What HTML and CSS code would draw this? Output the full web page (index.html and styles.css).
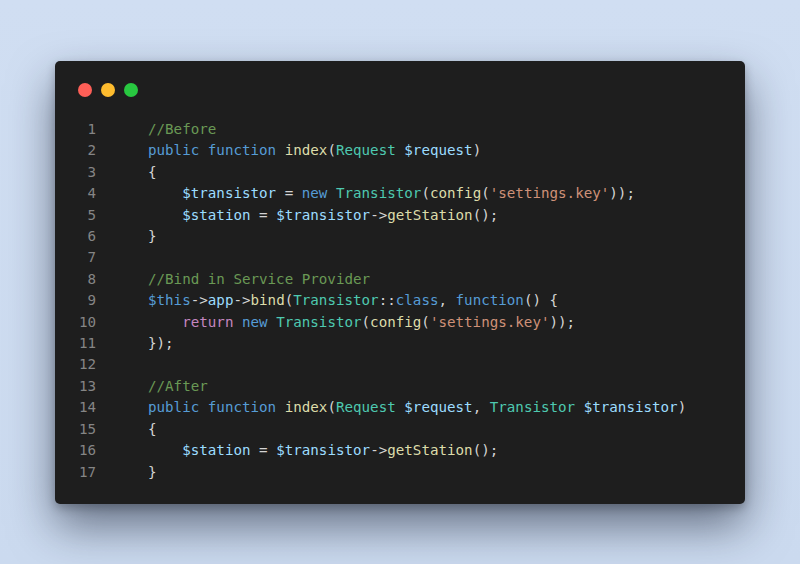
FILE: index.html
```html
<!DOCTYPE html>
<html>
<head>
<meta charset="utf-8">
<link rel="stylesheet" href="styles.css">
</head>
<body>
<div class="stage">
  <div class="window">
    <div class="titlebar">
      <span class="dot red"></span>
      <span class="dot yellow"></span>
      <span class="dot green"></span>
    </div>
    <div class="code">
      <div class="ln">1</div><div class="src"><span class="c">//Before</span></div>
      <div class="ln">2</div><div class="src"><span class="k">public</span> <span class="k">function</span> <span class="f">index</span><span class="p">(</span><span class="t">Request</span> <span class="v">$request</span><span class="p">)</span></div>
      <div class="ln">3</div><div class="src"><span class="p">{</span></div>
      <div class="ln">4</div><div class="src">    <span class="v">$transistor</span> <span class="p">=</span> <span class="k">new</span> <span class="t">Transistor</span><span class="p">(</span><span class="f">config</span><span class="p">(</span><span class="s">'settings.key'</span><span class="p">));</span></div>
      <div class="ln">5</div><div class="src">    <span class="v">$station</span> <span class="p">=</span> <span class="v">$transistor</span><span class="p">-&gt;</span><span class="f">getStation</span><span class="p">();</span></div>
      <div class="ln">6</div><div class="src"><span class="p">}</span></div>
      <div class="ln">7</div><div class="src"> </div>
      <div class="ln">8</div><div class="src"><span class="c">//Bind in Service Provider</span></div>
      <div class="ln">9</div><div class="src"><span class="k">$this</span><span class="p">-&gt;</span><span class="v">app</span><span class="p">-&gt;</span><span class="f">bind</span><span class="p">(</span><span class="t">Transistor</span><span class="p">::</span><span class="k">class</span><span class="p">,</span> <span class="k">function</span><span class="p">() {</span></div>
      <div class="ln">10</div><div class="src">    <span class="r">return</span> <span class="k">new</span> <span class="t">Transistor</span><span class="p">(</span><span class="f">config</span><span class="p">(</span><span class="s">'settings.key'</span><span class="p">));</span></div>
      <div class="ln">11</div><div class="src"><span class="p">});</span></div>
      <div class="ln">12</div><div class="src"> </div>
      <div class="ln">13</div><div class="src"><span class="c">//After</span></div>
      <div class="ln">14</div><div class="src"><span class="k">public</span> <span class="k">function</span> <span class="f">index</span><span class="p">(</span><span class="t">Request</span> <span class="v">$request</span><span class="p">,</span> <span class="t">Transistor</span> <span class="v">$transistor</span><span class="p">)</span></div>
      <div class="ln">15</div><div class="src"><span class="p">{</span></div>
      <div class="ln">16</div><div class="src">    <span class="v">$station</span> <span class="p">=</span> <span class="v">$transistor</span><span class="p">-&gt;</span><span class="f">getStation</span><span class="p">();</span></div>
      <div class="ln">17</div><div class="src"><span class="p">}</span></div>
    </div>
  </div>
</div>
</body>
</html>
```
FILE: styles.css
```css
html, body {
  margin: 0;
  padding: 0;
}
body {
  width: 800px;
  height: 564px;
  background: linear-gradient(180deg, #d0def2 0%, #cbdaef 100%);
  overflow: hidden;
}
.stage {
  width: 800px;
  height: 564px;
  display: flex;
  align-items: center;
  justify-content: center;
}
.window {
  width: 690px;
  height: 443px;
  margin-top: 1px;
  background: #1e1e1e;
  border-radius: 5px;
  box-shadow: 0 22px 45px rgba(20, 28, 45, 0.55), 0 4px 10px rgba(0,0,0,0.25);
  box-sizing: border-box;
  padding: 22px 0 0 0;
}
.titlebar {
  display: flex;
  gap: 9px;
  padding-left: 23px;
  height: 14px;
}
.dot {
  width: 14px;
  height: 14px;
  border-radius: 50%;
  display: block;
}
.red { background: #fe5f57; }
.yellow { background: #febc2e; }
.green { background: #28c840; }
.code {
  margin-top: 22px;
  display: grid;
  grid-template-columns: 21px 1fr;
  column-gap: 52px;
  padding-left: 20px;
  font-family: "DejaVu Sans Mono", monospace;
  font-size: 14.2px;
  line-height: 21.4px;
  color: #d4d4d4;
}
.ln {
  text-align: right;
  color: #858585;
}
.src {
  white-space: pre;
}
.c { color: #6a9955; }
.k { color: #569cd6; }
.f { color: #dcdcaa; }
.t { color: #4ec9b0; }
.v { color: #9cdcfe; }
.s { color: #ce9178; }
.r { color: #c586c0; }
.p { color: #d4d4d4; }
```
